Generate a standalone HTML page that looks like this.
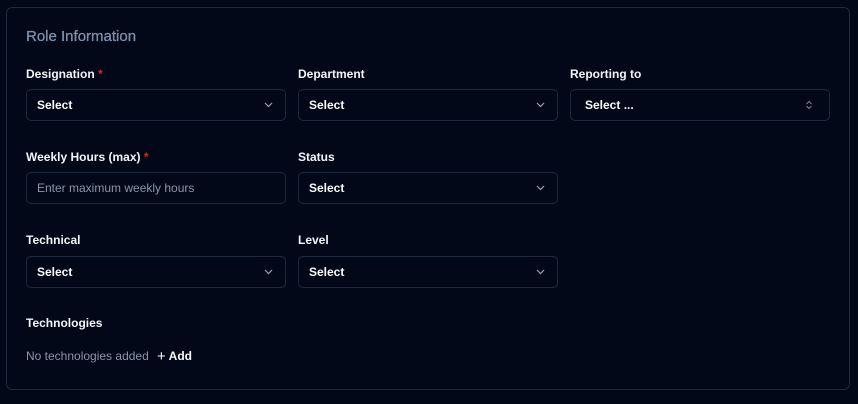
<!DOCTYPE html>
<html><head><style>
*{box-sizing:border-box;margin:0;padding:0}
body{width:858px;height:404px;background:#020817;font-family:"Liberation Sans",sans-serif;position:relative;overflow:hidden}
.panel{position:absolute;left:6px;top:7px;width:844px;height:383px;border:1px solid #1e293b;border-radius:6px}
.t{position:absolute;left:26px;top:28px;font-size:15px;color:#7d8fac;-webkit-text-stroke:0.3px #7d8fac}
.l{position:absolute;font-size:12px;font-weight:bold;color:#f1f5f9}
.l .r{color:#dc2626}
.f{position:absolute;width:260px;height:32px;border:1px solid #1e293b;border-radius:5px;font-size:12px;color:#f8fafc;padding:0 0 0 10px;line-height:30px;font-weight:bold}
.f svg{position:absolute;right:12px;top:11px}
.ph{color:#8a96a8;font-weight:normal}
</style></head><body>
<div class="panel"></div>
<div class="t">Role Information</div>
<div class="l" style="left:26px;top:67px">Designation <span class="r">*</span></div>
<div class="l" style="left:298px;top:67px">Department</div>
<div class="l" style="left:570px;top:67px">Reporting to</div>
<div class="f" style="left:26px;top:89px">Select<svg width="9" height="8"><path d="M1 2l3.5 3.5L8 2" stroke="#9aa4b2" fill="none" stroke-width="1.2"/></svg></div>
<div class="f" style="left:298px;top:89px">Select<svg width="9" height="8"><path d="M1 2l3.5 3.5L8 2" stroke="#9aa4b2" fill="none" stroke-width="1.2"/></svg></div>
<div class="f" style="left:570px;top:89px;padding-left:14px">Select ...<svg width="8" height="10" style="top:10px;right:16px"><path d="M1.5 4L4 1.5 6.5 4M1.5 6L4 8.5 6.5 6" stroke="#7a8494" fill="none" stroke-width="1"/></svg></div>
<div class="l" style="left:26px;top:150px">Weekly Hours (max) <span class="r">*</span></div>
<div class="l" style="left:298px;top:150px">Status</div>
<div class="f" style="left:26px;top:172px"><span class="ph">Enter maximum weekly hours</span></div>
<div class="f" style="left:298px;top:172px">Select<svg width="9" height="8"><path d="M1 2l3.5 3.5L8 2" stroke="#9aa4b2" fill="none" stroke-width="1.2"/></svg></div>
<div class="l" style="left:26px;top:233px">Technical</div>
<div class="l" style="left:298px;top:233px">Level</div>
<div class="f" style="left:26px;top:256px">Select<svg width="9" height="8"><path d="M1 2l3.5 3.5L8 2" stroke="#9aa4b2" fill="none" stroke-width="1.2"/></svg></div>
<div class="f" style="left:298px;top:256px">Select<svg width="9" height="8"><path d="M1 2l3.5 3.5L8 2" stroke="#9aa4b2" fill="none" stroke-width="1.2"/></svg></div>
<div class="l" style="left:26px;top:316px">Technologies</div>
<div style="position:absolute;left:26px;top:349px;font-size:12px;color:#8a96a8">No technologies added</div>
<div style="position:absolute;left:157px;top:347px;font-size:12px;font-weight:bold;color:#f8fafc"><span style="font-weight:normal;font-size:15px;position:relative;top:1px">+</span> Add</div>
</body></html>
